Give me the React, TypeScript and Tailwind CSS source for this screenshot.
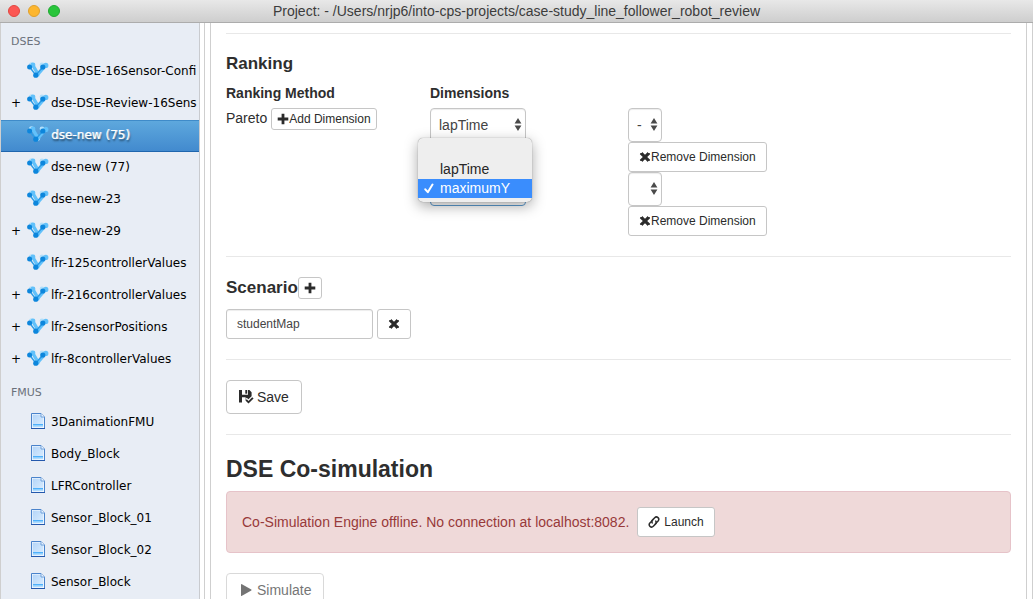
import { useState, type ReactNode } from "react";

type Entry = { name: string; expandable?: boolean };

const dses: Entry[] = [
  { name: "dse-DSE-16Sensor-Confi" },
  { name: "dse-DSE-Review-16Sens", expandable: true },
  { name: "dse-new (75)" },
  { name: "dse-new (77)" },
  { name: "dse-new-23" },
  { name: "dse-new-29", expandable: true },
  { name: "lfr-125controllerValues" },
  { name: "lfr-216controllerValues", expandable: true },
  { name: "lfr-2sensorPositions", expandable: true },
  { name: "lfr-8controllerValues", expandable: true },
];

const fmus: Entry[] = [
  { name: "3DanimationFMU" },
  { name: "Body_Block" },
  { name: "LFRController" },
  { name: "Sensor_Block_01" },
  { name: "Sensor_Block_02" },
  { name: "Sensor_Block" },
];

function DseIcon() {
  return (
    <svg width="22" height="16" viewBox="0 0 22 16" aria-hidden="true">
      <g fill="#b3dffa">
        <circle cx="4.5" cy="2.8" r="2.6" />
        <circle cx="15" cy="2.800" r="2.4" />
        <circle cx="10.5" cy="12.3" r="2.6" />
      </g>
      <path d="M6 3.500L11 12L18.500 3.500" stroke="#62c1fa" strokeWidth="3.4" fill="none" />
      <circle cx="6" cy="3" r="2.4" fill="#62c1fa" />
      <circle cx="18.800" cy="3.400" r="2.6" fill="#62c1fa" />
      <path d="M2.600 5L8.800 13.200L15.800 5" stroke="#2b9be6" strokeWidth="1.4" fill="none" />
      <circle cx="2.600" cy="5" r="2.5" fill="#0d86dc" />
      <circle cx="15.800" cy="5" r="2.6" fill="#0d86dc" />
      <circle cx="8.800" cy="13.200" r="2.6" fill="#0d86dc" />
    </svg>
  );
}

function FileIcon() {
  return (
    <svg width="14" height="16" viewBox="0 0 14 16" aria-hidden="true">
      <defs>
        <linearGradient id="page" x1="0" y1="0" x2="1" y2="1">
          <stop offset="0" stopColor="#b4d5f8" />
          <stop offset="1" stopColor="#dceeff" />
        </linearGradient>
      </defs>
      <path d="M.5 .5H10L13.500 4V15.500H.5Z" fill="#fff" stroke="#4a83cb" />
      <path d="M1.500 1.500H9.500L12.500 4.500V14.500H1.500Z" fill="url(#page)" />
      <path d="M10 .5V4H13.500" fill="#eef6ff" stroke="#6d9fda" />
      <path d="M2 11H12V13.500H2Z" fill="#8fd0ff" />
      <path d="M2 11.500H12" stroke="#4fb0fa" />
      <path d="M0 15.500H14" stroke="#2458ac" />
    </svg>
  );
}

function PlusIcon() {
  return (
    <svg width="12" height="12" viewBox="0 0 12 12" fill="currentColor" aria-hidden="true">
      <path d="M4.600 .8h2.800v3.800h3.900v2.800H7.400v3.800H4.600V7.400H.7V4.600h3.900z" />
    </svg>
  );
}

function RemoveIcon() {
  return (
    <svg width="12" height="12" viewBox="0 0 12 12" fill="currentColor" aria-hidden="true">
      <path d="M3.200 .9L6 3.700 8.800 .9 9.300 1.900 10.900 2.300 11.100 3.200 8.200 6 11.100 8.800 10.900 9.700 9.300 10.100 8.800 11.100 6 8.300 3.200 11.100 2.700 10.100 1.100 9.700 .9 8.800 3.800 6 .9 3.200 1.100 2.300 2.700 1.900z" />
    </svg>
  );
}

function SavedIcon() {
  return (
    <svg width="15" height="14" viewBox="0 0 15 14" fill="currentColor" aria-hidden="true">
      <path d="M0 0H3V4.700H9V0H10.400L12.600 2.200V6.200L9.400 9.300 7.800 7.800 6 9.600 6.600 10.200V7.300H3V12.500H0Z" />
      <path d="M6.300 0H8.200V3.700H6.300Z" />
      <path d="M7.800 9.200L9.500 10.900 13.200 7.200 14.600 8.600 9.500 13.600 6.400 10.600z" />
    </svg>
  );
}

function LinkIcon() {
  return (
    <svg width="12" height="12" viewBox="0 0 12 12" fill="none" stroke="currentColor" strokeWidth="1.500" strokeLinecap="round" aria-hidden="true">
      <path d="M4.200 6.900C3.500 5.900 3.600 4.900 4.400 4.100L6.700 1.700C7.600 .8 9 .7 10 1.600 11 2.600 11 3.900 10.100 4.900L7.600 7.500" />
      <path d="M7.800 5.100C8.500 6.100 8.400 7.100 7.600 7.900L5.300 10.300C4.400 11.200 3 11.300 2 10.400 1 9.400 1 8.100 1.900 7.100L4.400 4.500" />
    </svg>
  );
}

function PlayIcon() {
  return (
    <svg width="14" height="14" viewBox="0 0 14 14" fill="currentColor" aria-hidden="true">
      <path d="M2 1.200Q2 .8 2.500 1L12.300 6.600Q12.800 7 12.300 7.400L2.500 13Q2 13.200 2 12.800Z" />
    </svg>
  );
}

function CheckIcon() {
  return (
    <svg width="10" height="11" viewBox="0 0 10 11" fill="none" stroke="currentColor" strokeWidth="2" strokeLinecap="round" strokeLinejoin="round" aria-hidden="true">
      <path d="M1.300 6.300L3.800 9.200 8.500 1.500" />
    </svg>
  );
}

const sizes = {
  xs: "h-[22px] rounded-[3px] px-[5px] text-xs",
  sm: "h-[30px] rounded-[3px] px-[10px] text-xs",
  md: "h-[34px] rounded-[4px] px-3 text-sm",
};

function Button({ size, label, muted, children }: { size: keyof typeof sizes; label?: string; muted?: boolean; children: ReactNode }) {
  return (
    <button
      type="button"
      aria-label={label}
      disabled={muted}
      className={`inline-flex shrink-0 items-center border border-[#c6c6c6] bg-white whitespace-nowrap text-[#2b2b2b] disabled:opacity-65 ${sizes[size]}`}
    >
      {children}
    </button>
  );
}

function Select({ label, options, value, wide, focused }: { label: string; options: string[]; value: string; wide?: boolean; focused?: boolean }) {
  const [current, setCurrent] = useState(value);
  return (
    <div className={`relative h-[34px] ${wide ? "w-24" : "w-[34px]"}`}>
      <select
        aria-label={label}
        value={current}
        onChange={(e) => setCurrent(e.target.value)}
        className={`size-full appearance-none rounded-[4px] border bg-white pl-2 text-sm text-[#444] shadow-[inset_0_1px_1px_rgba(0,0,0,0.075)] outline-none ${focused ? "border-[#5b9bd0]" : "border-[#c6c6c6]"}`}
      >
        {options.map((o) => (
          <option key={o} value={o}>
            {o}
          </option>
        ))}
      </select>
      <svg className="pointer-events-none absolute top-[10px] right-1" width="8" height="13" viewBox="0 0 8 13" fill="#4a4a4a" aria-hidden="true">
        <path d="M4 0L7.400 5.500H.6ZM4 13L.6 7.500H7.400Z" />
      </svg>
    </div>
  );
}

function DimensionMenu() {
  return (
    <ul
      role="listbox"
      aria-label="Dimension"
      className="absolute top-[30px] -left-3 w-[114px] rounded-[5px] bg-[#eee] py-1 text-sm leading-[19px] text-[#262626] shadow-[0_0_1px_rgba(0,0,0,0.5),0_4px_14px_rgba(0,0,0,0.35)]"
    >
      <li role="option" aria-selected="false" aria-label="None" className="h-[18px]" />
      <li role="option" aria-selected="false" className="pl-[22px]">
        lapTime
      </li>
      <li role="option" aria-selected="true" className="flex items-center gap-[6px] bg-[#3a8dfd] pl-[6px] text-white">
        <CheckIcon />
        maximumY
      </li>
    </ul>
  );
}

function Group({ title, entries, icon, selected, onSelect }: { title: string; entries: Entry[]; icon: ReactNode; selected: string; onSelect: (n: string) => void }) {
  return (
    <section>
      <h2 className="h-[31px] pl-[10px] text-[11px] leading-[34px] text-[#6b717b]">{title}</h2>
      <ul>
        {entries.map((e) => (
          <li key={e.name}>
            <button
              type="button"
              onClick={() => onSelect(e.name)}
              className={`flex h-8 w-full items-center border-y pb-1 text-left text-xs whitespace-nowrap ${
                e.name === selected
                  ? "border-t-[#3f8bc9] border-b-[#1f66ae] bg-linear-to-b from-[#5ea8dd] to-[#428ace] text-white [text-shadow:1px_0_0_#ffffffa0,1px_2px_2px_#00000090]"
                  : "border-transparent text-black"
              }`}
            >
              <span className="w-[26px] shrink-0 pt-[2px] pl-[10px]">{e.expandable ? "+" : ""}</span>
              <span className="flex w-6 shrink-0 justify-center pr-[2px]">{icon}</span>
              <span className="pt-[2px]">{e.name}</span>
            </button>
          </li>
        ))}
      </ul>
    </section>
  );
}

function Rule() {
  return <hr className="border-t border-[#e8e8e8]" />;
}

export default function App() {
  const [selected, setSelected] = useState("dse-new (75)");
  return (
    <div className="flex h-screen flex-col overflow-hidden bg-white font-['Liberation_Sans',sans-serif] text-sm leading-5 text-[#2e2e2e]">
      <header className="flex h-[23px] shrink-0 items-center border-b border-[#acacac] bg-linear-to-b from-[#e8e8e8] to-[#cecece] px-2">
        <div className="flex flex-1 gap-2">
          <button type="button" aria-label="Close" className="size-3 rounded-full border border-[#e2463f] bg-[#fc5753]" />
          <button type="button" aria-label="Minimize" className="size-3 rounded-full border border-[#e0a02b] bg-[#fdb62e]" />
          <button type="button" aria-label="Zoom" className="size-3 rounded-full border border-[#1fa931] bg-[#28c53a]" />
        </div>
        <h1 className="text-sm whitespace-nowrap text-[#3c3c3c]">Project: - /Users/nrjp6/into-cps-projects/case-study_line_follower_robot_review</h1>
        <div className="flex-1" />
      </header>

      <div className="flex min-h-0 flex-1 border-x border-[#cfcfcf]">
        <nav aria-label="Project browser" className="w-[199px] shrink-0 overflow-hidden border-r border-[#c9cbcf] bg-[#e8edf5] pt-[2px] font-['DejaVu_Sans',sans-serif]">
          <Group title="DSES" entries={dses} icon={<DseIcon />} selected={selected} onSelect={setSelected} />
          <Group title="FMUS" entries={fmus} icon={<FileIcon />} selected={selected} onSelect={setSelected} />
        </nav>

        <div className="ml-1 flex min-w-0 flex-1 border-l border-[#cfcfcf] pr-[5px] pl-[5px]">
          <main className="min-w-0 flex-1 overflow-hidden border-x border-[#cfcfcf] px-[15px] pt-[10px]">
            <Rule />
            <section className="py-5">
              <h2 className="mb-[9px] text-[17px] font-bold">Ranking</h2>
              <div className="grid grid-cols-[204fr_198fr_383fr]">
                <div>
                  <h3 className="mb-[5px] font-bold">Ranking Method</h3>
                  <div className="flex h-[22px] items-start gap-1">
                    <span>Pareto</span>
                    <Button size="xs">
                      <PlusIcon />
                      Add Dimension
                    </Button>
                  </div>
                </div>
                <div>
                  <h3 className="mb-[5px] font-bold">Dimensions</h3>
                  <div className="relative flex flex-col gap-[30px]">
                    <Select label="First dimension" options={["", "lapTime", "maximumY"]} value="lapTime" wide />
                    <Select label="Second dimension" options={["", "lapTime", "maximumY"]} value="maximumY" wide focused />
                    <DimensionMenu />
                  </div>
                </div>
                <div className="flex flex-col items-start pt-[25px]">
                  <Select label="First direction" options={["", "-", "+"]} value="-" />
                  <Button size="sm">
                    <RemoveIcon />
                    Remove Dimension
                  </Button>
                  <Select label="Second direction" options={["", "-", "+"]} value="" />
                  <Button size="sm">
                    <RemoveIcon />
                    Remove Dimension
                  </Button>
                </div>
              </div>
            </section>
            <Rule />
            <section className="py-5">
              <div className="mb-[10px] flex items-center">
                <h2 className="text-[17px] font-bold">Scenario</h2>
                <Button size="xs" label="Add scenario">
                  <PlusIcon />
                </Button>
              </div>
              <div className="flex gap-1">
                <input
                  aria-label="Scenario name"
                  defaultValue="studentMap"
                  className="h-[30px] w-[147px] rounded-[3px] border border-[#c6c6c6] px-[10px] text-xs text-[#444] shadow-[inset_0_1px_1px_rgba(0,0,0,0.075)]"
                />
                <Button size="sm" label="Remove scenario">
                  <RemoveIcon />
                </Button>
              </div>
            </section>
            <Rule />
            <div className="flex py-5">
              <Button size="md">
                <SavedIcon />
                <span className="ml-[3px]">Save</span>
              </Button>
            </div>
            <Rule />
            <section className="pt-5">
              <h2 className="mb-2 text-[23px] leading-7 font-bold">DSE Co-simulation</h2>
              <div role="alert" className="mb-5 flex items-center gap-2 rounded-[4px] border border-[#e6c3c9] bg-[#efd9d9] p-[15px] text-[#98393a]">
                <span>Co-Simulation Engine offline. No connection at localhost:8082.</span>
                <Button size="sm">
                  <LinkIcon />
                  <span className="ml-1">Launch</span>
                </Button>
              </div>
              <Button size="md" muted>
                <PlayIcon />
                <span className="ml-1">Simulate</span>
              </Button>
            </section>
          </main>
        </div>
      </div>
    </div>
  );
}
